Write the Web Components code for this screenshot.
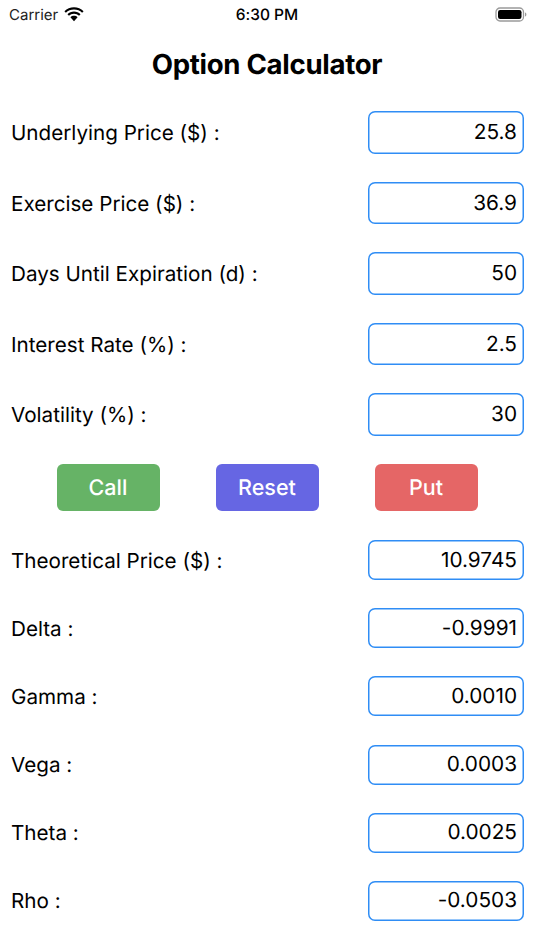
<!DOCTYPE html>
<html>
<head>
<meta charset="utf-8">
<style>
    html, body { margin: 0; padding: 0; background: #fff; }
    body { width: 534px; height: 950px; overflow: hidden; font-family: Inter, "Liberation Sans", sans-serif; color: #000; text-rendering: geometricPrecision; font-feature-settings: "calt" 0; }
    .inputs { display: flex; flex-direction: column; gap: 28px; }
    .buttons { display: flex; justify-content: center; gap: 56px; margin-top: 28.5px; }
    .outputs { display: flex; flex-direction: column; gap: 28.2px; margin-top: 29px; }
</style>
</head>
<body>
<status-bar></status-bar>
<app-title>Option Calculator</app-title>
<div class="inputs">
    <calc-row label="Underlying Price ($) :" value="25.8"></calc-row>
    <calc-row label="Exercise Price ($) :" value="36.9"></calc-row>
    <calc-row label="Days Until Expiration (d) :" value="50"></calc-row>
    <calc-row label="Interest Rate (%) :" value="2.5"></calc-row>
    <calc-row label="Volatility (%) :" value="30"></calc-row>
</div>
<div class="buttons">
    <action-button color="#66b366">Call</action-button>
    <action-button color="#6666e3">Reset</action-button>
    <action-button color="#e56666">Put</action-button>
</div>
<div class="outputs">
    <calc-row small label="Theoretical Price ($) :" value="10.9745"></calc-row>
    <calc-row small label="Delta :" value="-0.9991"></calc-row>
    <calc-row small label="Gamma :" value="0.0010"></calc-row>
    <calc-row small label="Vega :" value="0.0003"></calc-row>
    <calc-row small label="Theta :" value="0.0025"></calc-row>
    <calc-row small label="Rho :" value="-0.0503"></calc-row>
</div>

<script>
class StatusBar extends HTMLElement {
    constructor() {
        super()
        this.attachShadow({ mode: 'open' }).innerHTML = `
        <style>
            :host { display: grid; grid-template-columns: 1fr auto 1fr; align-items: center; height: 28px; font-size: 15px; }
            .left { display: flex; align-items: center; gap: 6px; padding-left: 9px; color: #222; }
            .time { font-weight: 500; font-size: 15.500px; }
            .right { display: flex; justify-content: flex-end; padding-right: 7px; }
            svg { display: block; }
        </style>
        <div class="left">
            <span>Carrier</span>
            <svg width="20" height="15" viewBox="0 0 19 14">
                <path d="M9.5 2.2c3 0 5.7 1.1 7.700 3.100l1.400-1.500C16.200 1.400 13 0 9.500 0S2.800 1.400.4 3.800l1.400 1.500c2-2 4.700-3.100 7.700-3.100z"/>
                <path d="M9.500 6.300c1.900 0 3.500.7 4.800 1.900l1.400-1.500C14.100 5.100 11.900 4.200 9.500 4.200S4.900 5.100 3.300 6.700l1.400 1.500c1.300-1.200 2.900-1.900 4.800-1.900z"/>
                <path d="M9.500 8.300c-1.300 0-2.500.5-3.400 1.300l3.400 3.700 3.400-3.700c-.9-.8-2.100-1.300-3.400-1.300z"/>
            </svg>
        </div>
        <div class="time">6:30 PM</div>
        <div class="right">
            <svg width="32" height="15" viewBox="0 0 32 15">
                <rect x="1" y="1" width="27.500" height="13" rx="4" fill="none" stroke="#9a9a9a" stroke-width="1.300"/>
                <rect x="3" y="3" width="23.500" height="9" rx="2.200" fill="#000"/>
                <path d="M30 5.500c.9.300 1.400 1 1.400 2s-.5 1.700-1.400 2z" fill="#9a9a9a"/>
            </svg>
        </div>
        `
    }
}

class AppTitle extends HTMLElement {
    constructor() {
        super()
        this.attachShadow({ mode: 'open' }).innerHTML = `
        <style>
            :host { display: block; height: 83px; padding-top: 19px; box-sizing: border-box; text-align: center; font-size: 27.600px; font-weight: 700; line-height: 34px; letter-spacing: -0.3px; }
        </style>
        <slot></slot>
        `
    }
}

class CalcRow extends HTMLElement {
    constructor() {
        super()
        this.attachShadow({ mode: 'open' }).innerHTML = `
        <style>
            :host { display: flex; justify-content: space-between; align-items: center; height: 42.500px; padding: 0 10px 0 11px; font-size: 20.800px; }
            :host([small]) { height: 40px; }
            .label { font-size: 20.650px; padding-top: 1px; }
            .box { box-sizing: border-box; width: 156px; height: 100%; display: flex; align-items: center; justify-content: flex-end; padding: 1px 7px 0 0; background: #fff; box-shadow: inset 0 0 0 1.500px #2f8df5; border-radius: 7px; }
            :host([small]) .label { padding-top: 0; }
            :host([small]) .box { padding-top: 0; }
        </style>
        <span class="label"></span>
        <div class="box"></div>
        `
        this.shadowRoot.querySelector('.label').textContent = this.getAttribute('label')
        this.shadowRoot.querySelector('.box').textContent = this.getAttribute('value')
    }
}

class ActionButton extends HTMLElement {
    constructor() {
        super()
        this.attachShadow({ mode: 'open' }).innerHTML = `
        <style>
            :host { display: flex; align-items: center; justify-content: center; box-sizing: border-box; width: 103px; height: 47px; border-radius: 6px; color: #fff; font-size: 21.500px; font-weight: 500; }
        </style>
        <slot></slot>
        `
        this.style.background = this.getAttribute('color')
    }
}

customElements.define('status-bar', StatusBar)
customElements.define('app-title', AppTitle)
customElements.define('calc-row', CalcRow)
customElements.define('action-button', ActionButton)
</script>
</body>
</html>
